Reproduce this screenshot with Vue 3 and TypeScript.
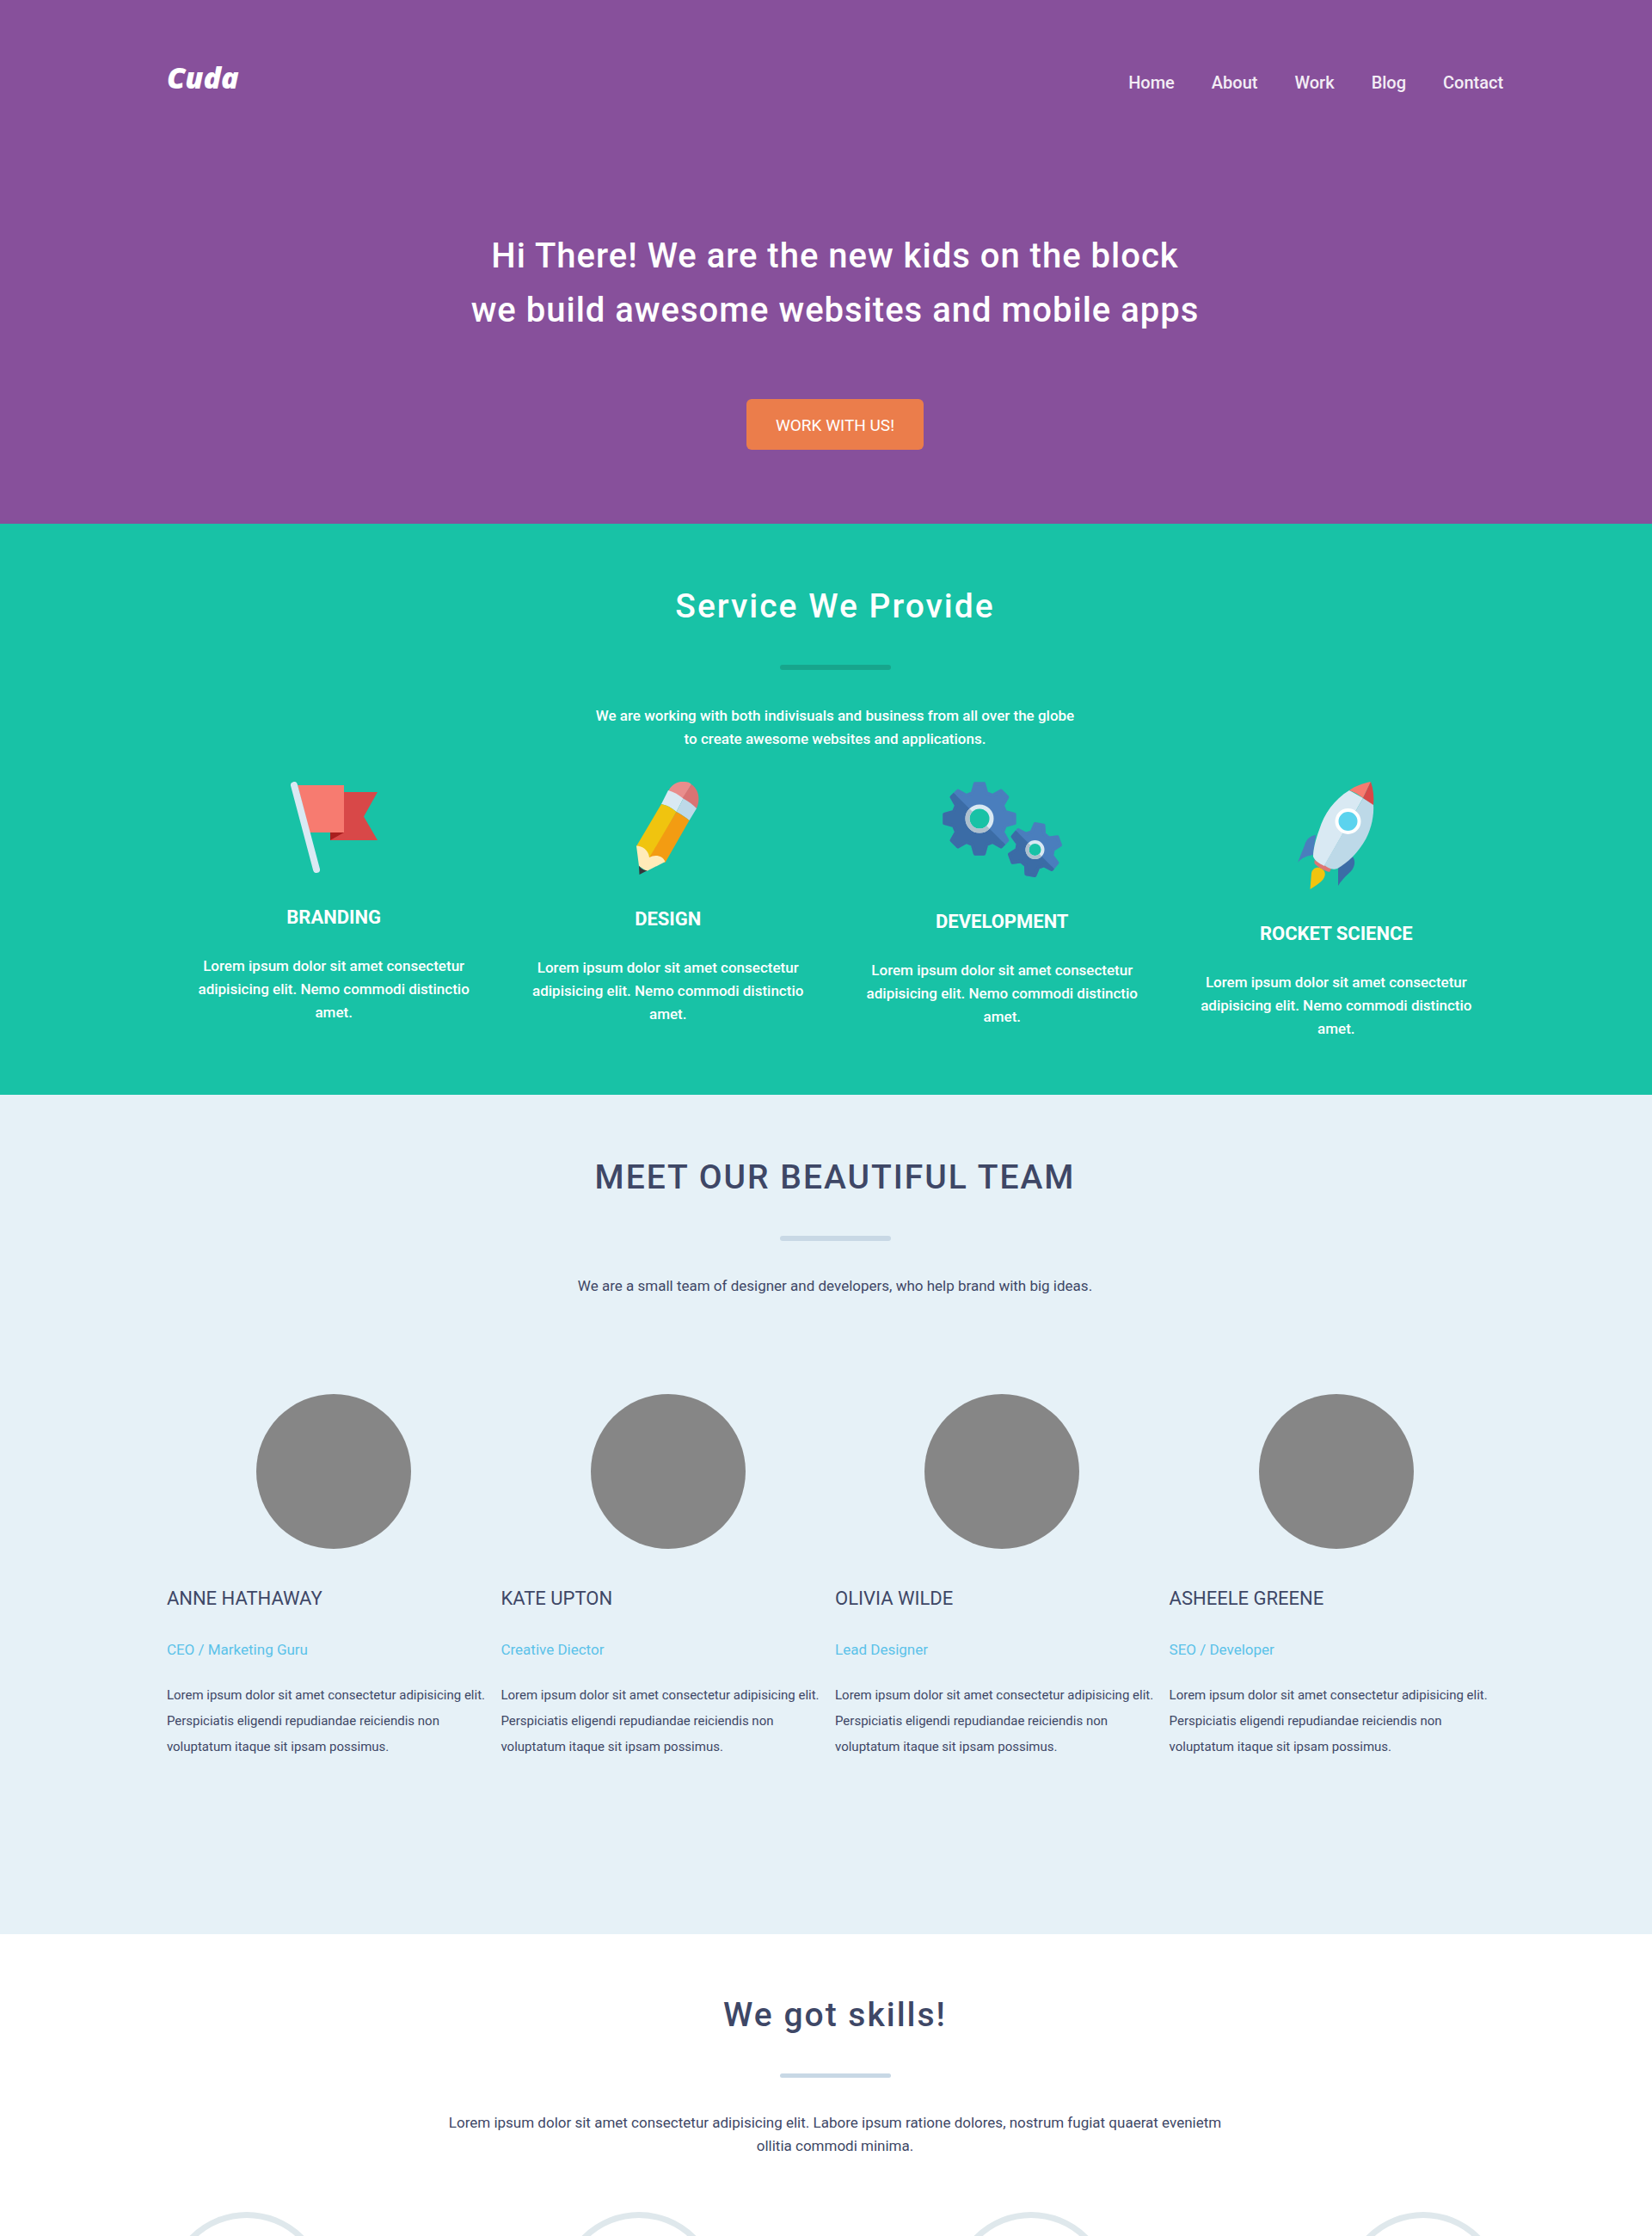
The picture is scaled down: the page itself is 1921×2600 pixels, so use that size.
<script setup lang="ts">
interface Member {
  name: string
  role: string
}

const links: string[] = ['Home', 'About', 'Work', 'Blog', 'Contact']

const services: string[] = ['Branding', 'Design', 'Development', 'Rocket Science']

const members: Member[] = [
  { name: 'Anne Hathaway', role: 'CEO / Marketing Guru' },
  { name: 'Kate Upton', role: 'Creative Diector' },
  { name: 'Olivia Wilde', role: 'Lead Designer' },
  { name: 'Asheele Greene', role: 'SEO / Developer' },
]

// Outline of a cog: each tooth rises from the root circle to the outer circle.
function cog(cx: number, cy: number, outer: number, root: number, teeth: number, start: number): string {
  const step = 360 / teeth
  const points: string[] = []
  const add = (radius: number, degrees: number) => {
    const a = (degrees * Math.PI) / 180
    points.push(`${(cx + radius * Math.cos(a)).toFixed(2)} ${(cy + radius * Math.sin(a)).toFixed(2)}`)
  }
  for (let i = 0; i < teeth; i++) {
    const mid = start + i * step
    add(root, mid - step * 0.34)
    add(outer, mid - step * 0.16)
    add(outer, mid + step * 0.16)
    add(root, mid + step * 0.34)
  }
  return `M${points.join('L')}Z`
}

const bigCog = cog(44, 43, 41, 31, 8, -90)
const smallCog = cog(108.5, 79, 30, 21, 6, -80)
</script>

<template>
  <div class="page">
    <div class="hero">
      <header class="wrap header">
        <a class="logo" href="#">Cuda</a>
        <nav class="nav">
          <a v-for="link in links" :key="link" href="#">{{ link }}</a>
        </nav>
      </header>
      <div class="wrap intro">
        <h1>Hi There! We are the new kids on the block<br />we build awesome websites and mobile apps</h1>
        <button class="cta" type="button">WORK WITH US!</button>
      </div>
    </div>

    <section class="services">
      <div class="wrap">
        <h2>Service We Provide</h2>
        <div class="bar"></div>
        <p class="lead">We are working with both indivisuals and business from all over the globe<br />to create awesome websites and applications.</p>
        <div class="columns">
          <article v-for="service in services" :key="service" class="service">
            <svg v-if="service === 'Branding'" width="101" height="106" viewBox="0 0 101 106" aria-hidden="true">
              <path d="M62 12H101L85 40.500L101 68H46V59H62Z" fill="#d84848" />
              <path d="M46 59H62L46 68Z" fill="#a91e1e" />
              <path d="M8 4H62V59H22Z" fill="#f77b70" />
              <path d="M4 4L30 102" stroke="#d9e9f3" stroke-width="8" stroke-linecap="round" />
            </svg>
            <svg v-else-if="service === 'Design'" width="73" height="108" viewBox="0 0 73 108" aria-hidden="true">
              <path d="M37 11C41 3 48 -1 56 0C60 0 62 1 64 3L54 20Z" fill="#e98d8c" />
              <path d="M64 3C72 9 75 19 70 31L53 20Z" fill="#d97373" />
              <path d="M37 10C44 12 49 15 54.500 19.500L46.500 35C41 30 35 27 29 26Z" fill="#d9e9f3" />
              <path d="M54.500 19.500C61 23 66 27 70 31L61.500 45C57 41 52 38 46.500 35Z" fill="#bdd9e8" />
              <path d="M29 26C35 27 41 30 46.500 35L16 90L0 75Z" fill="#f0c40f" />
              <path d="M46.500 35C52 38 57 41 61.500 45L33.500 94L14 90Z" fill="#f39c12" />
              <path d="M0 74.500C7 75 14 79 15 88C22 84 31 86 33.500 93L12 104L3 98Z" fill="#ffebb8" />
              <path d="M3 97.500C5 101 8 103 13 103L3.500 108Z" fill="#35363a" />
            </svg>
            <svg v-else-if="service === 'Development'" width="140" height="111" viewBox="0 0 140 111" aria-hidden="true">
              <defs>
                <clipPath id="big-shade"><path d="M-1 -2L89 88V111H-1Z" /></clipPath>
                <clipPath id="small-shade"><path d="M70 40.500L147 117.500H70Z" /></clipPath>
              </defs>
              <g stroke-width="4" stroke-linejoin="round">
                <path :d="bigCog" fill="#4a7ebd" stroke="#4a7ebd" />
                <path :d="bigCog" fill="#3b6ca6" stroke="#3b6ca6" clip-path="url(#big-shade)" />
                <path :d="smallCog" fill="#4a7ebd" stroke="#4a7ebd" />
                <path :d="smallCog" fill="#3b6ca6" stroke="#3b6ca6" clip-path="url(#small-shade)" />
              </g>
              <circle cx="44" cy="43" r="14" fill="#18c2a6" stroke="#d9e9f3" stroke-width="5" />
              <circle cx="44" cy="43" r="14" fill="none" stroke="#aec0ce" stroke-width="5" clip-path="url(#big-shade)" />
              <circle cx="108.500" cy="79" r="9" fill="#18c2a6" stroke="#d9e9f3" stroke-width="4" />
              <circle cx="108.500" cy="79" r="9" fill="none" stroke="#aec0ce" stroke-width="4" clip-path="url(#small-shade)" />
            </svg>
            <svg v-else width="89" height="125" viewBox="0 0 89 125" aria-hidden="true">
              <path d="M21 62C12 63 9 70 8 74L0 94C5 88 11 86 18 85Z" fill="#4a7ebd" />
              <path d="M62 85C68 90 67 98 62 104C57 109 51 114 47 121V101Z" fill="#3b6ca6" />
              <path d="M14.500 125L16 106C18 98 27 98 31 104C34 111 28 117 14.500 125Z" fill="#f1c40f" />
              <path d="M19.500 91L39 101L37 105C30 103 23 99 19.500 95Z" fill="#dd7573" />
              <path d="M60 10C42 21 31 37 25 56C21 67 18 78 18 87C20 92 25 95 31 98L76 19Z" fill="#d9e9f3" />
              <path d="M76 19L88 26C89 38 86 54 79 67C70 83 58 94 46 101C40 103 35 100 31 97Z" fill="#bdd9e8" />
              <path d="M85 0C75 2 67 5 60 10C66 12 71 15 76 19Z" fill="#f77b70" />
              <path d="M85 0C88 9 89 18 88 27L76 19Z" fill="#d84848" />
              <circle cx="58.500" cy="46" r="13" fill="#5bd3ee" stroke="#fff" stroke-width="4" />
            </svg>
            <h3>{{ service }}</h3>
            <p>Lorem ipsum dolor sit amet consectetur adipisicing elit. Nemo commodi distinctio amet.</p>
          </article>
        </div>
      </div>
    </section>

    <section class="team">
      <div class="wrap">
        <h2>MEET OUR BEAUTIFUL TEAM</h2>
        <div class="bar"></div>
        <p class="lead">We are a small team of designer and developers, who help brand with big ideas.</p>
        <div class="columns">
          <article v-for="member in members" :key="member.name" class="member">
            <div class="avatar"></div>
            <h3>{{ member.name }}</h3>
            <p class="role">{{ member.role }}</p>
            <p class="bio">Lorem ipsum dolor sit amet consectetur adipisicing elit.<br />Perspiciatis eligendi repudiandae reiciendis non<br />voluptatum itaque sit ipsam possimus.</p>
          </article>
        </div>
      </div>
    </section>

    <section class="skills">
      <div class="wrap">
        <h2>We got skills!</h2>
        <div class="bar"></div>
        <p class="lead">Lorem ipsum dolor sit amet consectetur adipisicing elit. Labore ipsum ratione dolores, nostrum fugiat quaerat evenietm<br />ollitia commodi minima.</p>
        <div class="rings">
          <div v-for="n in 4" :key="n" class="ring"></div>
        </div>
      </div>
    </section>
  </div>
</template>

<style>
body {
  margin: 0;
}
</style>

<style scoped>
.page {
  font-family: Roboto, "Open Sans", sans-serif;
  color: #3e4766;
  background: #fff;
}

.wrap {
  padding: 0 9% 0 calc(9% + 21px);
}

h1,
h2,
h3,
p {
  margin: 0;
}

a {
  color: inherit;
  text-decoration: none;
}

.hero {
  padding: 75px 0 86px;
  color: #fff;
  background: #87509b;
}

.header {
  display: flex;
  align-items: baseline;
  justify-content: space-between;
}

.logo {
  font: italic 800 34px/30px "Open Sans", sans-serif;
}

.nav {
  display: flex;
  gap: 43px;
  font-size: 20px;
  font-weight: 500;
  line-height: 30px;
  color: #f3edf5;
}

.intro {
  display: flex;
  flex-direction: column;
  align-items: center;
  margin-top: 155px;
}

h1 {
  font-size: 40px;
  font-weight: 500;
  line-height: 63px;
  letter-spacing: 1px;
  text-align: center;
}

.cta {
  margin-top: 72px;
  padding: 17px 34px 15px;
  border: 0;
  border-radius: 6px;
  font: 400 19px/27px Roboto, sans-serif;
  color: #fff;
  background: #eb7d4b;
}

section {
  padding-top: 66px;
}

h2 {
  font-size: 39px;
  font-weight: 500;
  line-height: 60px;
  letter-spacing: 2px;
  text-align: center;
}

.bar {
  width: 129px;
  height: 6px;
  margin: 38px auto 39px;
  border-radius: 3px;
  background: #c8d8e5;
}

.lead {
  font-size: 17px;
  line-height: 27px;
  text-align: center;
}

.columns {
  display: grid;
  grid-template-columns: repeat(4, 1fr);
}

.services {
  padding-bottom: 63px;
  font-weight: 500;
  color: #fff;
  background: #18c2a6;
}

.services .bar {
  margin-bottom: 40px;
  background: #17a58c;
}

.services .columns {
  margin-top: 36px;
}

.service {
  display: flex;
  flex-direction: column;
  align-items: center;
  padding: 0 32px;
  text-align: center;
}

.service h3 {
  margin: 37px 0 28px;
  font-size: 22px;
  font-weight: 700;
  line-height: 30px;
  text-transform: uppercase;
}

.service p {
  font-size: 17px;
  line-height: 27px;
}

.team {
  padding-bottom: 203px;
  background: #e6f1f7;
}

.team .columns {
  margin-top: 112px;
}

.avatar {
  width: 180px;
  height: 180px;
  margin: 0 auto;
  border-radius: 50%;
  background: #868686;
}

.member h3 {
  margin-top: 43px;
  font-size: 22px;
  font-weight: 400;
  line-height: 30px;
  text-transform: uppercase;
}

.role {
  margin-top: 31px;
  font-size: 17px;
  line-height: 27px;
  color: #5bc2e9;
}

.bio {
  margin-top: 24px;
  font-size: 15px;
  line-height: 30px;
  white-space: nowrap;
}

.skills {
  padding-top: 64px;
}

.skills .bar {
  height: 5px;
}

.rings {
  display: flex;
  justify-content: space-between;
  margin-top: 63px;
}

.ring {
  box-sizing: border-box;
  width: 186px;
  height: 186px;
  border: 7px solid #dfe8ec;
  border-radius: 50%;
}
</style>
